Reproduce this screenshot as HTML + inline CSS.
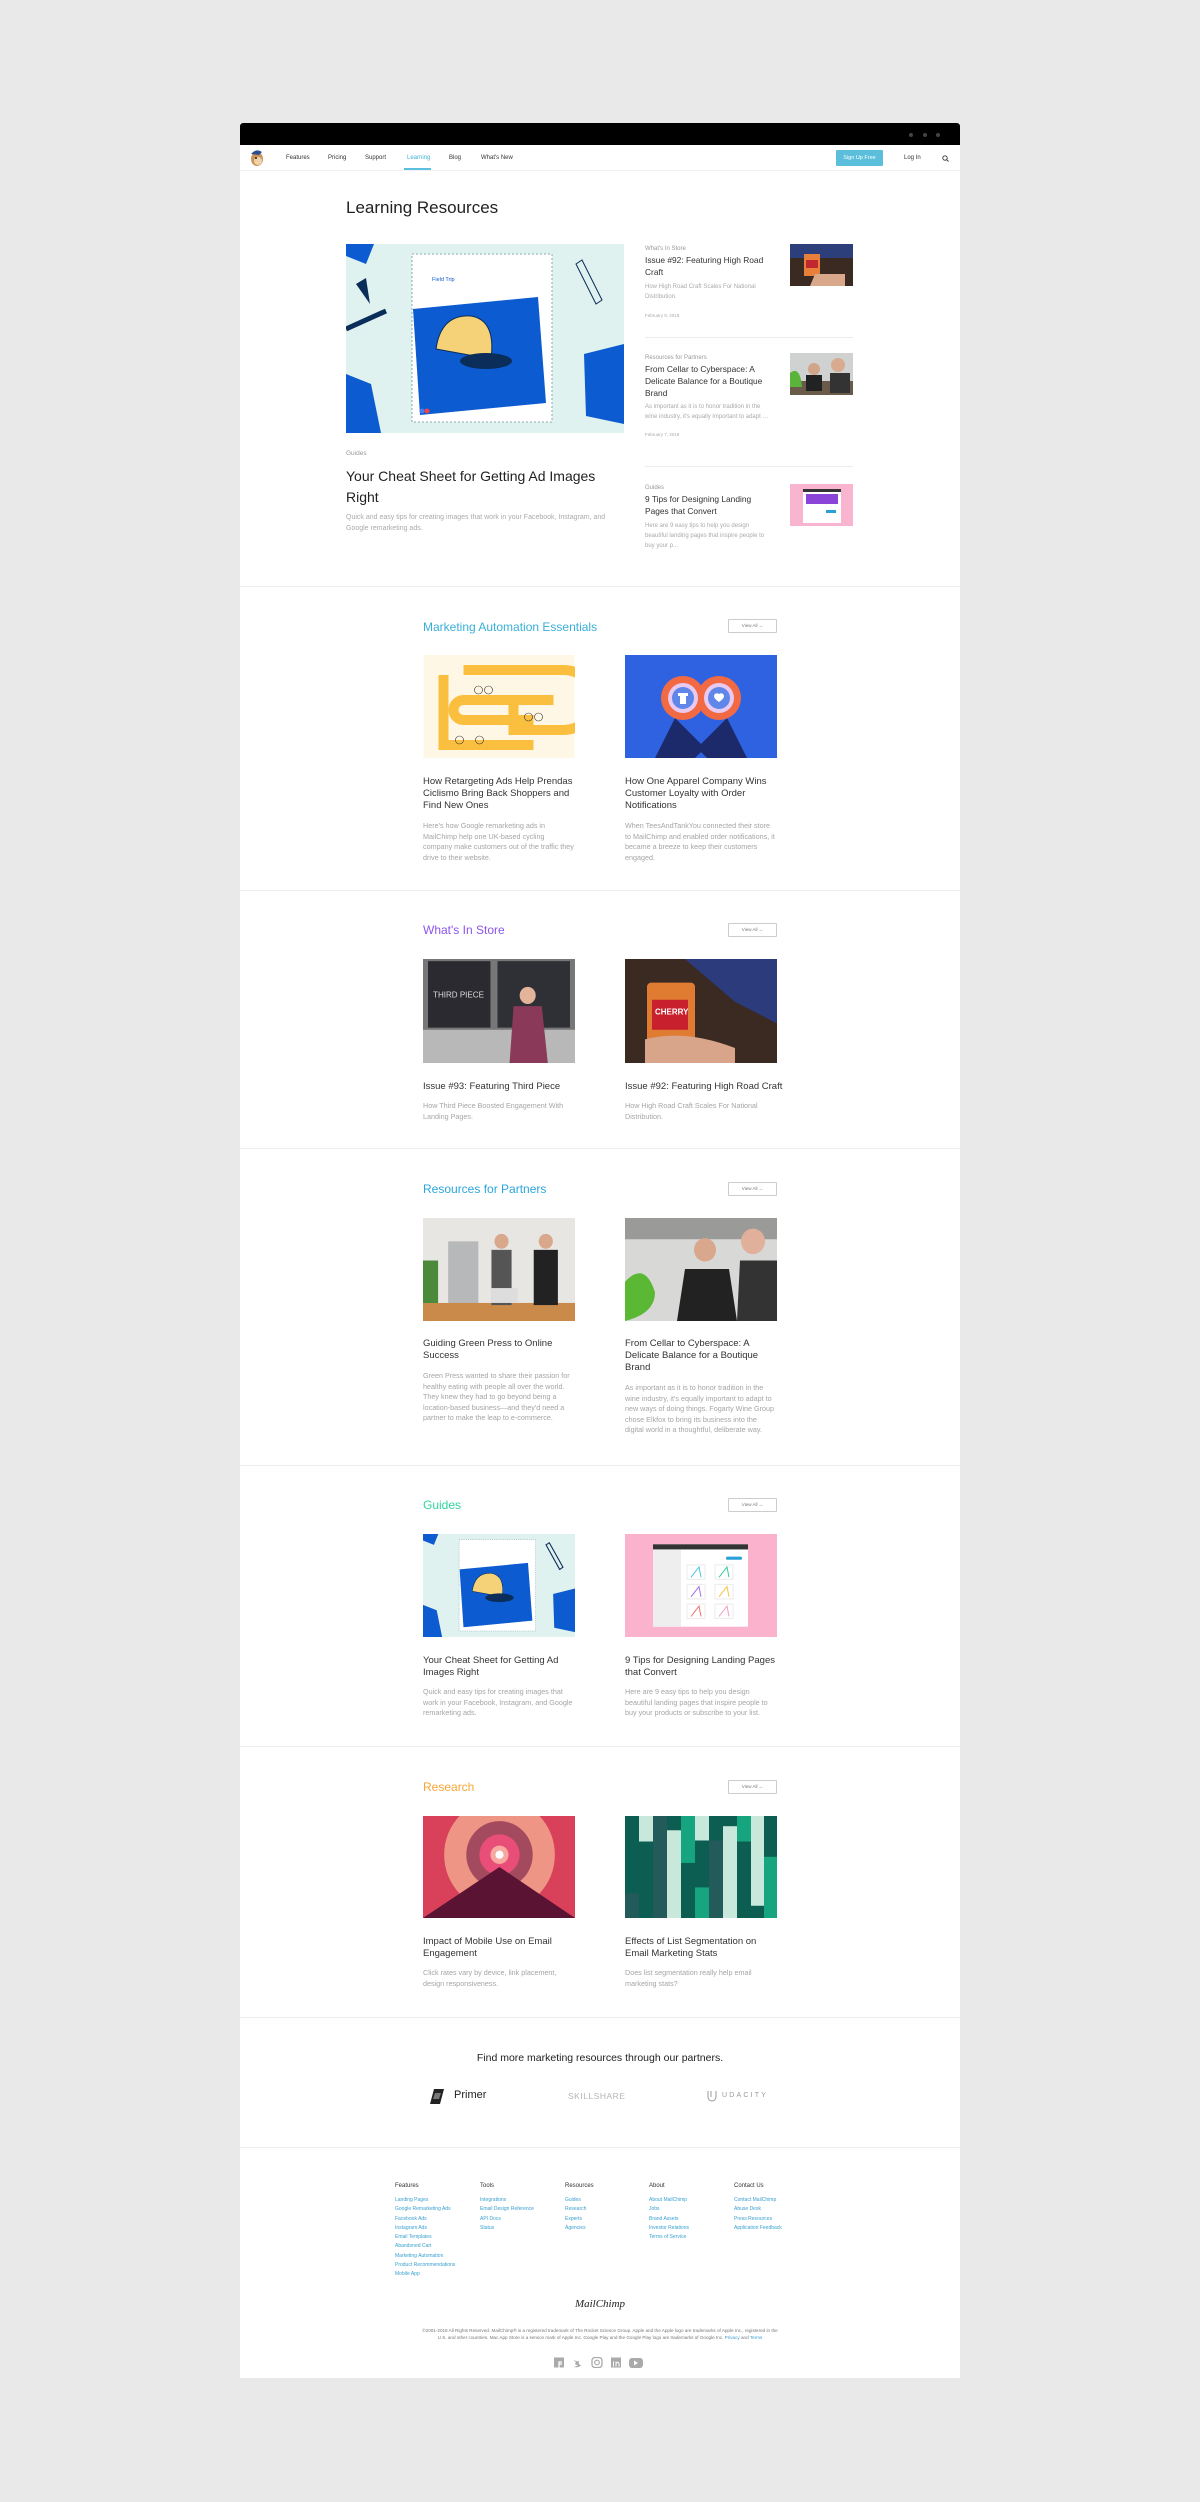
<!DOCTYPE html>
<html><head><meta charset="utf-8"><style>
*{margin:0;padding:0;box-sizing:border-box}
body{width:1200px;height:2502px;background:#e9e9e9;font-family:"Liberation Sans",Arial,sans-serif;position:relative;overflow:hidden}
.a{position:absolute;white-space:nowrap}
#frame{position:absolute;left:240px;top:123px;width:720px;height:2255px;background:#fff}
.hr{position:absolute;left:240px;width:720px;height:1px;background:#ececec}
.nav{font-size:6px;color:#333;top:155px}
.h{font-size:12px;line-height:14px}
.va{position:absolute;left:728px;width:49px;height:14px;border:1px solid #ccc;border-radius:1px;font-size:4.5px;color:#777;text-align:center;line-height:12px}
.t{position:absolute;font-size:9.5px;line-height:12px;color:#333;width:152px}
.d{position:absolute;font-size:7.2px;line-height:10.6px;color:#a5a5a5;width:152px}
.img{position:absolute;width:152px;overflow:hidden}
.rc{position:absolute;left:645px;width:125px}
.rc .c{font-size:6px;color:#999;line-height:10px}
.rc .tt{font-size:8.4px;color:#333;line-height:11.8px}
.rc .dd{font-size:6px;color:#aaa;line-height:10px}
.fh{position:absolute;top:2183px;font-size:6px;color:#333}
.fl{position:absolute;top:2196px;font-size:5px;line-height:9.3px;color:#3aa0d0}
</style></head><body>
<div id="frame"></div>
<div class="a" style="left:240px;top:123px;width:720px;height:22px;background:#000;border-radius:3px 3px 0 0"></div>
<div class="a" style="left:909px;top:133px;width:4px;height:4px;border-radius:50%;background:#444"></div>
<div class="a" style="left:923px;top:133px;width:4px;height:4px;border-radius:50%;background:#444"></div>
<div class="a" style="left:936px;top:133px;width:4px;height:4px;border-radius:50%;background:#444"></div>
<!-- nav -->
<svg class="a" style="left:249px;top:148px" width="16" height="20" viewBox="0 0 16 20"><ellipse cx="8" cy="11" rx="6" ry="7" fill="#c9955c"/><ellipse cx="9" cy="13" rx="4" ry="4" fill="#f0d2a8"/><path d="M2 6 Q7 0 13 4 L10 7 Z" fill="#2a4e8f"/><circle cx="7" cy="10" r="1" fill="#222"/></svg>
<div class="a nav" style="left:286px">Features</div>
<div class="a nav" style="left:328px">Pricing</div>
<div class="a nav" style="left:365px">Support</div>
<div class="a nav" style="left:407px;color:#3fb0d4">Learning</div>
<div class="a nav" style="left:449px">Blog</div>
<div class="a nav" style="left:481px">What's New</div>
<div class="a" style="left:404px;top:168px;width:27px;height:2px;background:#5bc0de"></div>
<div class="hr" style="top:170px;background:#f2f2f2"></div>
<div class="a" style="left:836px;top:150px;width:47px;height:16px;background:#5bbfdc;border-radius:1px;color:#fff;font-size:5.5px;text-align:center;line-height:16px">Sign Up Free</div>
<div class="a nav" style="left:904px">Log In</div>
<svg class="a" style="left:942px;top:155px" width="7" height="7" viewBox="0 0 7 7"><circle cx="3" cy="3" r="2.2" fill="none" stroke="#333" stroke-width="0.9"/><line x1="4.6" y1="4.6" x2="6.5" y2="6.5" stroke="#333" stroke-width="0.9"/></svg>
<!-- hero -->
<div class="a" style="left:346px;top:198px;font-size:17px;color:#222">Learning Resources</div>
<svg class="a" style="left:346px;top:244px" width="278" height="189" viewBox="0 0 278 189"><rect width="278" height="189" fill="#dff2f0"/><path d="M0 0h28l-8 20L0 12z" fill="#0c5bd0"/><path d="M10 40l14 20-4-26z" fill="#0b2d5a"/><rect x="66" y="10" width="140" height="168" fill="#fff" stroke="#8aa" stroke-dasharray="2 2"/><path d="M105 55l125-12 8 106-126 12z" fill="#0c5bd0" transform="translate(-38 10)"/><path d="M90 105 Q95 70 125 72 Q150 76 145 115z" fill="#f5d277" stroke="#0b2d5a"/><ellipse cx="140" cy="117" rx="26" ry="8" fill="#0b2d5a"/><text x="80" y="154" font-size="5.5" fill="#0c5bd0" font-family="Liberation Sans">6-Panel Hat</text><text x="86" y="37" font-size="5.5" fill="#0c5bd0" font-family="Liberation Sans">Field Trip</text><path d="M238 110l40-10v80l-38-8z" fill="#0c5bd0"/><path d="M230 20l20 40 6-4-20-40z" fill="none" stroke="#0b2d5a"/><path d="M0 130l25 10 10 49H0z" fill="#0c5bd0"/><path d="M0 85l40-18" stroke="#0b2d5a" stroke-width="5"/><circle cx="76" cy="167" r="2.5" fill="#4a7bf0"/><circle cx="81" cy="167" r="2.5" fill="#e44"/></svg>
<div class="a" style="left:346px;top:450px;font-size:6.5px;color:#999">Guides</div>
<div class="a" style="left:346px;top:466px;font-size:14px;line-height:21px;color:#222;white-space:normal;width:285px">Your Cheat Sheet for Getting Ad Images Right</div>
<div class="a" style="left:346px;top:512px;font-size:7px;line-height:11px;color:#aaa;white-space:normal;width:280px">Quick and easy tips for creating images that work in your Facebook, Instagram, and Google remarketing ads.</div>
<div class="rc" style="top:244px"><div class="c">What's In Store</div><div class="tt" style="margin-top:1px">Issue #92: Featuring High Road Craft</div><div class="dd" style="margin-top:3px">How High Road Craft Scales For National Distribution.</div><div class="dd" style="margin-top:9px;font-size:4.5px">February 9, 2018</div></div>
<div class="hr" style="left:645px;width:208px;top:337px"></div>
<div class="rc" style="top:353px"><div class="c">Resources for Partners</div><div class="tt" style="margin-top:1px">From Cellar to Cyberspace: A Delicate Balance for a Boutique Brand</div><div class="dd" style="margin-top:3px">As important as it is to honor tradition in the wine industry, it's equally important to adapt …</div><div class="dd" style="margin-top:8px;font-size:4.5px">February 7, 2018</div></div>
<div class="hr" style="left:645px;width:208px;top:466px"></div>
<div class="rc" style="top:483px"><div class="c">Guides</div><div class="tt" style="margin-top:1px">9 Tips for Designing Landing Pages that Convert</div><div class="dd" style="margin-top:3px">Here are 9 easy tips to help you design beautiful landing pages that inspire people to buy your p...</div></div>
<svg class="a" style="left:790px;top:244px" width="63" height="42"><rect width="63" height="42" fill="#3a2a22"/><rect x="0" y="0" width="63" height="14" fill="#2c3f7a"/><rect x="14" y="10" width="16" height="22" fill="#e87f3a"/><rect x="16" y="16" width="12" height="8" fill="#c2262e"/><path d="M25 30h30v12H20z" fill="#d9a78a"/></svg>
<svg class="a" style="left:790px;top:353px" width="63" height="42"><rect width="63" height="42" fill="#cfd2d0"/><rect y="28" width="63" height="14" fill="#6a5a4a"/><circle cx="24" cy="16" r="6" fill="#d2a48a"/><rect x="16" y="22" width="16" height="16" fill="#222"/><circle cx="48" cy="12" r="7" fill="#d8ab90"/><rect x="40" y="20" width="20" height="20" fill="#333"/><path d="M0 20q10-8 12 14H0z" fill="#5ab43a"/></svg>
<svg class="a" style="left:790px;top:484px" width="63" height="42"><rect width="63" height="42" fill="#f9b5cf"/><rect x="13" y="5" width="38" height="34" fill="#fff"/><rect x="13" y="5" width="38" height="3" fill="#333"/><rect x="16" y="10" width="32" height="10" fill="#8b44d8"/><rect x="36" y="26" width="10" height="3" fill="#2aa0d8"/></svg>
<div class="hr" style="top:586px"></div>
<!-- section: marketing automation -->
<div class="a h" style="left:423px;top:620px;color:#38afd8">Marketing Automation Essentials</div>
<div class="va" style="top:619px">View All →</div>
<svg class="img" style="left:423px;top:655px" width="151" height="103" viewBox="0 0 151 103"><rect width="151" height="103" fill="#fef7e6"/><path d="M40 15h100a10 10 0 0 1 0 60H90v-30h40M120 45H40a10 10 0 0 0 0 20h70" fill="none" stroke="#fbbf3f" stroke-width="10"/><path d="M20 20v70h90" fill="none" stroke="#fbbf3f" stroke-width="10"/><circle cx="55" cy="35" r="4" fill="none" stroke="#333" stroke-width=".6"/><circle cx="65" cy="35" r="4" fill="none" stroke="#333" stroke-width=".6"/><circle cx="105" cy="62" r="4" fill="none" stroke="#333" stroke-width=".6"/><circle cx="115" cy="62" r="4" fill="none" stroke="#333" stroke-width=".6"/><circle cx="36" cy="85" r="4" fill="none" stroke="#333" stroke-width=".6"/><circle cx="56" cy="85" r="4" fill="none" stroke="#333" stroke-width=".6"/></svg>
<svg class="img" style="left:625px;top:655px" width="152" height="103" viewBox="0 0 152 103"><rect width="152" height="103" fill="#2e62e0"/><path d="M30 103l20-40 30 30-10 10z" fill="#1c2a6b"/><path d="M122 103l-20-40-30 30 10 10z" fill="#1c2a6b"/><circle cx="58" cy="43" r="22" fill="#f26a44"/><circle cx="94" cy="43" r="22" fill="#f26a44"/><circle cx="58" cy="43" r="15" fill="#e8c9f0"/><circle cx="94" cy="43" r="15" fill="#e8c9f0"/><circle cx="58" cy="43" r="11" fill="#5f86e8"/><circle cx="94" cy="43" r="11" fill="#5f86e8"/><path d="M89 41a3 3 0 0 1 5-2 3 3 0 0 1 5 2c0 3-5 6-5 6s-5-3-5-6z" fill="#fff"/><path d="M53 38h10v3h-2v8h-6v-8h-2z" fill="#fff"/></svg>
<div class="t" style="left:423px;top:776px">How Retargeting Ads Help Prendas Ciclismo Bring Back Shoppers and Find New Ones</div>
<div class="t" style="left:625px;top:776px">How One Apparel Company Wins Customer Loyalty with Order Notifications</div>
<div class="d" style="left:423px;top:821px">Here's how Google remarketing ads in MailChimp help one UK-based cycling company make customers out of the traffic they drive to their website.</div>
<div class="d" style="left:625px;top:821px">When TeesAndTankYou connected their store to MailChimp and enabled order notifications, it became a breeze to keep their customers engaged.</div>
<div class="hr" style="top:890px"></div>
<!-- what's in store -->
<div class="a h" style="left:423px;top:923px;color:#8b55ee">What's In Store</div>
<div class="va" style="top:923px">View All →</div>
<svg class="img" style="left:423px;top:959px" width="151" height="104" viewBox="0 0 151 97" preserveAspectRatio="none"><rect width="151" height="97" fill="#777"/><rect x="5" y="2" width="62" height="62" fill="#2a2a30"/><rect x="74" y="2" width="72" height="62" fill="#2f3036"/><rect y="66" width="151" height="31" fill="#b8b8b8"/><circle cx="104" cy="34" r="8" fill="#e4b49a"/><path d="M90 44h28l6 53H86z" fill="#8a3a58"/><text x="10" y="36" font-size="8" fill="#ddd" font-family="Liberation Sans">THIRD PIECE</text></svg>
<svg class="img" style="left:625px;top:959px" width="152" height="104" viewBox="0 0 152 97" preserveAspectRatio="none"><rect width="152" height="97" fill="#3a2a22"/><path d="M60 0h92v60L110 40z" fill="#2b3b7c"/><rect x="22" y="22" width="48" height="56" rx="4" fill="#e07b32"/><rect x="27" y="38" width="36" height="28" fill="#c8202c"/><text x="30" y="52" font-size="8" fill="#fff" font-family="Liberation Sans" font-weight="bold">CHERRY</text><path d="M20 75q40-10 90 8v14H20z" fill="#d9a58a"/></svg>
<div class="t" style="left:423px;top:1081px">Issue #93: Featuring Third Piece</div>
<div class="t" style="left:625px;top:1081px;width:160px">Issue #92: Featuring High Road Craft</div>
<div class="d" style="left:423px;top:1101px">How Third Piece Boosted Engagement With Landing Pages.</div>
<div class="d" style="left:625px;top:1101px">How High Road Craft Scales For National Distribution.</div>
<div class="hr" style="top:1148px"></div>
<!-- partners -->
<div class="a h" style="left:423px;top:1182px;color:#2ba6dc">Resources for Partners</div>
<div class="va" style="top:1182px">View All →</div>
<svg class="img" style="left:423px;top:1218px" width="151" height="103" viewBox="0 0 151 97" preserveAspectRatio="none"><rect width="151" height="97" fill="#e8e6e2"/><rect x="25" y="22" width="30" height="60" fill="#b6b8ba"/><rect x="0" y="80" width="151" height="17" fill="#c98a4a"/><circle cx="78" cy="22" r="7" fill="#d9a88c"/><rect x="68" y="30" width="20" height="52" fill="#555"/><circle cx="122" cy="22" r="7" fill="#d9a88c"/><rect x="110" y="30" width="24" height="52" fill="#222"/><rect x="68" y="66" width="26" height="14" fill="#ddd"/><path d="M0 40h15v40H0z" fill="#4a8a3a"/></svg>
<svg class="img" style="left:625px;top:1218px" width="152" height="103" viewBox="0 0 152 97" preserveAspectRatio="none"><rect width="152" height="97" fill="#d8d8d6"/><rect y="0" width="152" height="20" fill="#9a9a98"/><circle cx="80" cy="30" r="11" fill="#d9a88c"/><path d="M60 48h44l8 49H52z" fill="#222"/><circle cx="128" cy="22" r="12" fill="#e0b09a"/><path d="M115 40h37v57h-40z" fill="#333"/><path d="M0 60q20-20 30 10 0 20-30 27z" fill="#5ab834"/></svg>
<div class="t" style="left:423px;top:1338px">Guiding Green Press to Online Success</div>
<div class="t" style="left:625px;top:1338px">From Cellar to Cyberspace: A Delicate Balance for a Boutique Brand</div>
<div class="d" style="left:423px;top:1371px">Green Press wanted to share their passion for healthy eating with people all over the world. They knew they had to go beyond being a location-based business—and they'd need a partner to make the leap to e-commerce.</div>
<div class="d" style="left:625px;top:1383px">As important as it is to honor tradition in the wine industry, it's equally important to adapt to new ways of doing things. Fogarty Wine Group chose Elkfox to bring its business into the digital world in a thoughtful, deliberate way.</div>
<div class="hr" style="top:1465px"></div>
<!-- guides -->
<div class="a h" style="left:423px;top:1498px;color:#2fd69b">Guides</div>
<div class="va" style="top:1498px">View All →</div>
<svg class="img" style="left:423px;top:1534px" width="151" height="103" viewBox="0 0 278 189" preserveAspectRatio="none"><rect width="278" height="189" fill="#dff2f0"/><path d="M0 0h28l-8 20L0 12z" fill="#0c5bd0"/><rect x="66" y="10" width="140" height="168" fill="#fff" stroke="#8aa" stroke-dasharray="2 2"/><path d="M67 65l125-12 8 106-126 12z" fill="#0c5bd0"/><path d="M90 105 Q95 70 125 72 Q150 76 145 115z" fill="#f5d277" stroke="#0b2d5a"/><ellipse cx="140" cy="117" rx="26" ry="8" fill="#0b2d5a"/><path d="M238 110l40-10v80l-38-8z" fill="#0c5bd0"/><path d="M0 130l25 10 10 49H0z" fill="#0c5bd0"/><path d="M225 20l25 45 6-4-25-45z" fill="none" stroke="#0b2d5a" stroke-width="2"/></svg>
<svg class="img" style="left:625px;top:1534px" width="152" height="103" viewBox="0 0 152 100" preserveAspectRatio="none"><rect width="152" height="100" fill="#fbb3cd"/><rect x="28" y="10" width="95" height="80" fill="#fff"/><rect x="28" y="10" width="95" height="5" fill="#333"/><rect x="28" y="15" width="28" height="75" fill="#eee"/><rect x="101" y="22" width="16" height="3" rx="1.5" fill="#2aa0d8"/><g fill="none" stroke-width="1.2"><rect x="62" y="30" width="18" height="14" stroke="#eee"/><rect x="90" y="30" width="18" height="14" stroke="#eee"/><rect x="62" y="49" width="18" height="14" stroke="#eee"/><rect x="90" y="49" width="18" height="14" stroke="#eee"/><rect x="62" y="68" width="18" height="14" stroke="#eee"/><rect x="90" y="68" width="18" height="14" stroke="#eee"/></g><path d="M66 42l8-10 2 10" stroke="#4cc6e0" fill="none"/><path d="M94 42l8-10 2 10" stroke="#2fd19a" fill="none"/><path d="M66 61l8-10 2 10" stroke="#a070e8" fill="none"/><path d="M94 61l8-10 2 10" stroke="#f6c344" fill="none"/><path d="M66 80l8-10 2 10" stroke="#f07070" fill="none"/><path d="M94 80l8-10 2 10" stroke="#f59fc4" fill="none"/></svg>
<div class="t" style="left:423px;top:1655px">Your Cheat Sheet for Getting Ad Images Right</div>
<div class="t" style="left:625px;top:1655px">9 Tips for Designing Landing Pages that Convert</div>
<div class="d" style="left:423px;top:1687px">Quick and easy tips for creating images that work in your Facebook, Instagram, and Google remarketing ads.</div>
<div class="d" style="left:625px;top:1687px">Here are 9 easy tips to help you design beautiful landing pages that inspire people to buy your products or subscribe to your list.</div>
<div class="hr" style="top:1746px"></div>
<!-- research -->
<div class="a h" style="left:423px;top:1780px;color:#f8a634">Research</div>
<div class="va" style="top:1780px">View All →</div>
<svg class="img" style="left:423px;top:1816px" width="151" height="102" viewBox="0 0 151 100" preserveAspectRatio="none"><rect width="151" height="100" fill="#d9415a"/><circle cx="76" cy="38" r="55" fill="#ee9585"/><circle cx="76" cy="38" r="33" fill="#a44a5e"/><circle cx="76" cy="38" r="20" fill="#e94e78"/><circle cx="76" cy="38" r="9" fill="#f7a9a0"/><circle cx="76" cy="38" r="4" fill="#fff"/><path d="M0 100L76 50l75 50z" fill="#5b1334"/></svg>
<svg class="img" style="left:625px;top:1816px" width="152" height="102" viewBox="0 0 152 100" preserveAspectRatio="none"><rect width="152" height="100" fill="#0c5e52"/><rect x="14" y="0" width="14" height="25" fill="#c9e8dc"/><rect x="28" y="0" width="14" height="100" fill="#235a5a"/><rect x="42" y="14" width="14" height="86" fill="#c9e8dc"/><rect x="56" y="0" width="14" height="46" fill="#16a57e"/><rect x="70" y="0" width="14" height="24" fill="#c9e8dc"/><rect x="84" y="24" width="14" height="76" fill="#235a5a"/><rect x="98" y="10" width="14" height="90" fill="#c9e8dc"/><rect x="112" y="0" width="14" height="25" fill="#16a57e"/><rect x="126" y="0" width="13" height="88" fill="#c9e8dc"/><rect x="139" y="40" width="13" height="60" fill="#16a57e"/><rect x="0" y="76" width="14" height="24" fill="#235a5a"/><rect x="70" y="70" width="14" height="30" fill="#16a57e"/></svg>
<div class="t" style="left:423px;top:1936px">Impact of Mobile Use on Email Engagement</div>
<div class="t" style="left:625px;top:1936px">Effects of List Segmentation on Email Marketing Stats</div>
<div class="d" style="left:423px;top:1968px">Click rates vary by device, link placement, design responsiveness.</div>
<div class="d" style="left:625px;top:1968px">Does list segmentation really help email marketing stats?</div>
<div class="hr" style="top:2017px"></div>
<!-- partners -->
<div class="a" style="left:0;width:1200px;text-align:center;top:2052px;font-size:10.5px;color:#222">Find more marketing resources through our partners.</div>
<svg class="a" style="left:430px;top:2089px" width="16" height="15"><path d="M4 0h10l-4 15H0z" fill="#222"/><path d="M5 4h6l-2 6H3z" fill="#777"/></svg>
<div class="a" style="left:454px;top:2089px;font-size:11px;color:#222">Primer</div>
<div class="a" style="left:568px;top:2091px;font-size:8.5px;color:#b5b5b5;letter-spacing:0.5px">SKILLSHARE</div>
<svg class="a" style="left:707px;top:2090px" width="10" height="12"><path d="M1 1v6a4 4 0 0 0 8 0V1M4 1v6" fill="none" stroke="#999" stroke-width="1"/></svg>
<div class="a" style="left:722px;top:2092px;font-size:7px;color:#999;letter-spacing:2.2px">UDACITY</div>
<div class="hr" style="top:2147px"></div>
<!-- footer -->
<div class="fh" style="left:395px">Features</div>
<div class="fh" style="left:480px">Tools</div>
<div class="fh" style="left:565px">Resources</div>
<div class="fh" style="left:649px">About</div>
<div class="fh" style="left:734px">Contact Us</div>
<div class="fl" style="left:395px">Landing Pages<br>Google Remarketing Ads<br>Facebook Ads<br>Instagram Ads<br>Email Templates<br>Abandoned Cart<br>Marketing Automation<br>Product Recommendations<br>Mobile App</div>
<div class="fl" style="left:480px">Integrations<br>Email Design Reference<br>API Docs<br>Status</div>
<div class="fl" style="left:565px">Guides<br>Research<br>Experts<br>Agencies</div>
<div class="fl" style="left:649px">About MailChimp<br>Jobs<br>Brand Assets<br>Investor Relations<br>Terms of Service</div>
<div class="fl" style="left:734px">Contact MailChimp<br>Abuse Desk<br>Press Resources<br>Application Feedback</div>
<div class="a" style="left:0;width:1200px;text-align:center;top:2298px;font-size:11px;font-style:italic;font-family:'Liberation Serif',serif;color:#222">MailChimp</div>
<div class="a" style="left:0;width:1200px;text-align:center;top:2327px;font-size:4.6px;line-height:7px;color:#777">©2001-2018 All Rights Reserved. MailChimp® is a registered trademark of The Rocket Science Group. Apple and the Apple logo are trademarks of Apple Inc., registered in the<br>U.S. and other countries. Mac App Store is a service mark of Apple Inc. Google Play and the Google Play logo are trademarks of Google Inc. <span style="color:#3aa0d0">Privacy</span> and <span style="color:#3aa0d0">Terms</span></div>
<svg class="a" style="left:554px;top:2357px" width="95" height="11"><rect x="0" y="0.5" width="10" height="10" fill="#aaa"/><path d="M5 10.5V5h3M5 7h3" stroke="#fff" stroke-width="1.3" fill="none"/><path d="M20 3q3 2 5 1-1 4 2 4-2 3-7 2 3-1 4-2-3 0-3-2 1 0 1-1-2-1-2-2z" fill="#aaa"/><rect x="38" y="0.5" width="10" height="10" rx="3" fill="none" stroke="#aaa" stroke-width="1.3"/><circle cx="43" cy="5.5" r="2.3" fill="none" stroke="#aaa" stroke-width="1.2"/><rect x="57" y="0.5" width="10" height="10" fill="#aaa"/><path d="M59.5 4.5v5M62 4.5v5M62 6.5q2-2.5 3 0v3" stroke="#fff" stroke-width="1" fill="none"/><rect x="75" y="1" width="14" height="10" rx="3" fill="#aaa"/><path d="M80 3.5v5l4-2.5z" fill="#fff"/></svg>
</body></html>
